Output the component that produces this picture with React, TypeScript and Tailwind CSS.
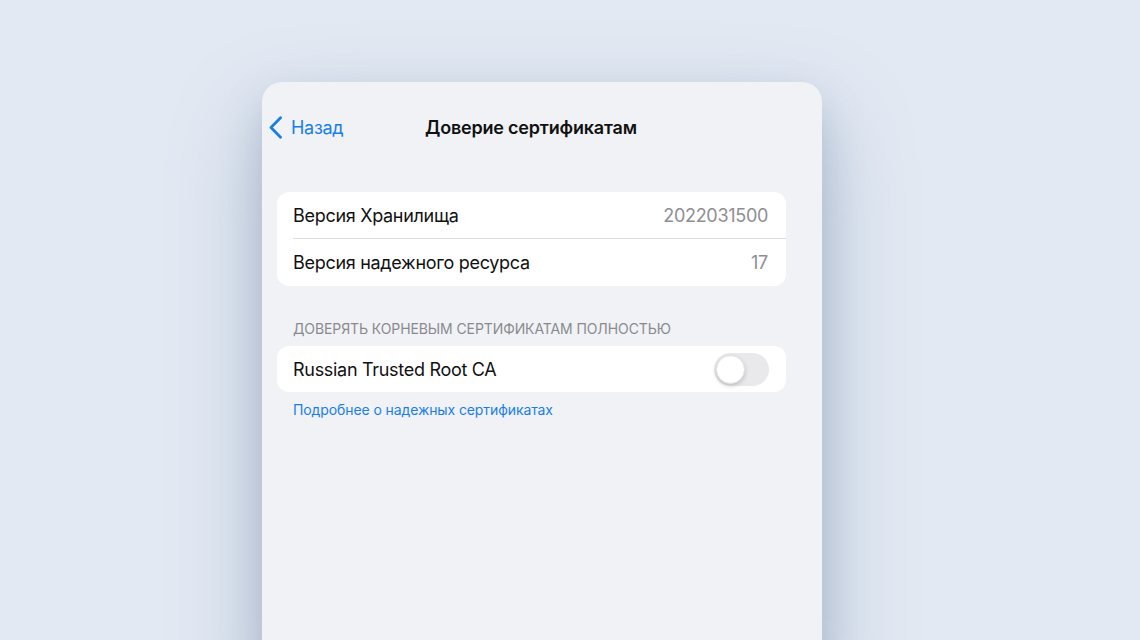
const FONT = { fontFamily: 'Inter, "Noto Sans", sans-serif' };

function BackChevron() {
  return (
    <svg width="15" height="23" viewBox="0 0 15 23" fill="none">
      <path
        d="M12.5 1.8 L3 11.5 L12.5 21.2"
        stroke="currentColor"
        strokeWidth="2.8"
        strokeLinecap="round"
        strokeLinejoin="round"
      />
    </svg>
  );
}

export default function App() {
  return (
    <div
      className="w-[1140px] h-[640px] overflow-hidden bg-[#e2e9f3] flex pl-[262px] pt-[82px]"
      style={FONT}
    >
      <div className="w-[560px] h-[600px] shrink-0 rounded-t-[20px] bg-[#f1f2f6] shadow-[0_40px_90px_rgba(120,140,170,0.45),0_20px_40px_rgba(110,130,160,0.3)] px-[15px]">
        {/* Nav bar */}
        <div className="relative h-[46px] mt-[22px] flex items-center">
          <div className="flex items-center gap-[8px] text-[#1a7ee8] -ml-[9px]">
            <BackChevron />
            <span className="text-[18px] tracking-[-0.3px]">Назад</span>
          </div>
          <span className="absolute left-[148px] text-[18px] font-semibold text-[#111] tracking-[-0.2px]">
            Доверие сертификатам
          </span>
        </div>

        {/* Versions group */}
        <div className="mt-[42px] w-[509px] bg-white rounded-[12px] pl-[16px]">
          <div className="h-[47px] flex items-center justify-between pr-[18px] border-b border-[#dcdce0]">
            <span className="text-[18px] text-[#111] tracking-[-0.3px]">Версия Хранилища</span>
            <span className="text-[18px] text-[#8e8e93] tracking-[-0.3px]">2022031500</span>
          </div>
          <div className="h-[47px] flex items-center justify-between pr-[18px]">
            <span className="text-[18px] text-[#111] tracking-[-0.3px]">Версия надежного ресурса</span>
            <span className="text-[18px] text-[#8e8e93] tracking-[-0.3px]">17</span>
          </div>
        </div>

        {/* Trust section */}
        <div className="mt-[33px] pl-[16px] text-[14px] leading-[20px] text-[#8a8a8e] uppercase tracking-[-0.1px]">
          Доверять корневым сертификатам полностью
        </div>
        <div className="mt-[7px] w-[509px] h-[46px] bg-white rounded-[12px] pl-[16px] pr-[17px] flex items-center justify-between">
          <span className="text-[18px] text-[#111] tracking-[-0.3px]">Russian Trusted Root CA</span>
          <div className="w-[55px] h-[33px] rounded-full bg-[#e9e9eb] p-[2px] flex items-center">
            <div className="w-[29px] h-[29px] rounded-full bg-white shadow-[0_2px_4px_rgba(0,0,0,0.18)] border border-[#e2e2e4]" />
          </div>
        </div>
        <div className="mt-[8px] pl-[16px] text-[14px] leading-[20px] text-[#1a7ee8] tracking-[-0.1px]">
          Подробнее о надежных сертификатах
        </div>
      </div>
    </div>
  );
}
